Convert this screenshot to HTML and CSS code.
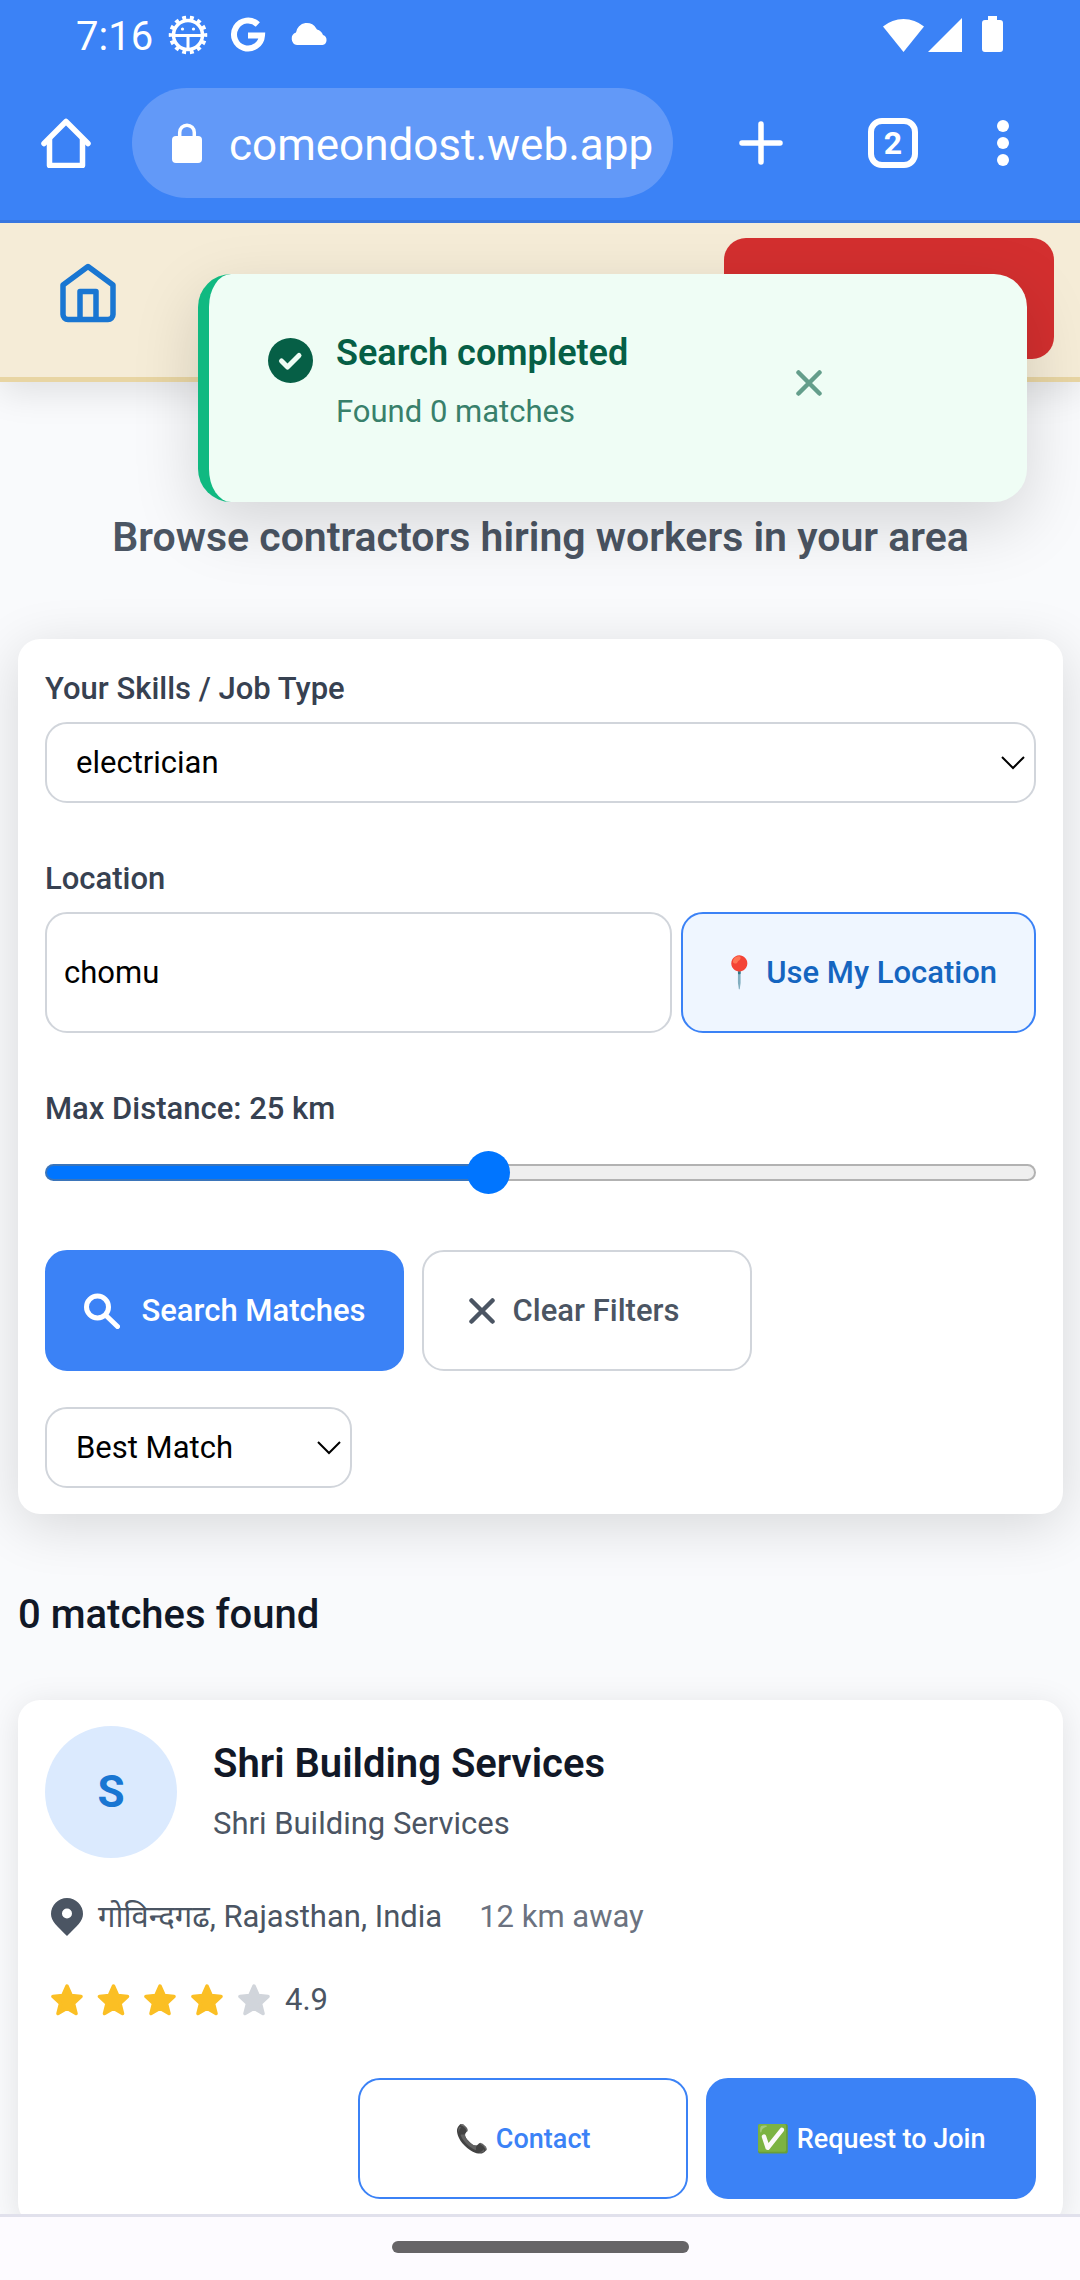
FILE: index.html
```html
<!DOCTYPE html>
<html lang="en">
<head>
<meta charset="utf-8">
<meta name="viewport" content="width=device-width">
<title>Browse contractors</title>
<link rel="stylesheet" href="styles.css">
</head>
<body>
<header class="browser">
  <div class="status">
    <span class="clock">7:16</span>
    <svg class="status-debug" width="40" height="40" viewBox="0 0 40 40" fill="none" stroke="#fff"><circle cx="20" cy="20" r="14.500" stroke-width="3.500"/><circle cx="20" cy="20" r="17" stroke-width="4.500" pathLength="140" stroke-dasharray="5 5" stroke-dashoffset="2.5"/><path d="M6 20.500h28M20 21v14" stroke-width="3"/><g fill="#fff" stroke="none"><circle cx="14.500" cy="14" r="1.600"/><circle cx="25.500" cy="14" r="1.600"/></g></svg>
    <svg class="status-google" width="36" height="36" viewBox="0 0 36 36" fill="none" stroke="#fff" stroke-width="6"><path d="M27.800 7.500A14 14 0 1 0 32 18.500H18"/></svg>
    <svg width="38" height="38" viewBox="0 0 38 38" fill="#fff"><path d="M7 29a6.500 6.500 0 0 1-1-12.500 11 11 0 0 1 21-3 9 9 0 0 1 6 5.500 5.200 5.200 0 0 1-.5 10z"/></svg>
    <span class="spacer"></span>
    <svg width="121" height="38" viewBox="0 0 121 38" fill="#fff"><path d="M0 10.500a32 32 0 0 1 41 0L20.500 36z"/><path d="M79 2v34H45z"/><path d="M105 0h9v4h3a3 3 0 0 1 3 3v26a3 3 0 0 1-3 3h-15a3 3 0 0 1-3-3V7a3 3 0 0 1 3-3h3z"/></svg>
  </div>
  <div class="toolbar">
    <button class="tool" type="button" aria-label="Home"><svg width="50" height="50" viewBox="0 0 50 50" fill="none" stroke="#fff" stroke-width="5.500" stroke-linecap="round" stroke-linejoin="round"><path d="M3 25.500L25 3.500l22 22"/><path d="M8.500 21v26.500h33V21"/></svg></button>
    <div class="address">
      <svg width="30" height="40" viewBox="0 0 30 40"><rect y="13" width="30" height="27" rx="4" fill="#fff"/><path d="M7.700 14V9.500a7.300 7.300 0 0 1 14.600 0V14" fill="none" stroke="#fff" stroke-width="3.500"/></svg>
      <input class="url" type="text" aria-label="Address" value="comeondost.web.app">
    </div>
    <button class="tool tool-new" type="button" aria-label="New tab"><svg width="44" height="44" viewBox="0 0 44 44" stroke="#fff" stroke-width="5.500" stroke-linecap="round"><path d="M3 22h38M22 3v38"/></svg></button>
    <button class="tool tabs" type="button">2</button>
    <button class="tool tool-menu" type="button" aria-label="Menu"><svg width="12" height="46" viewBox="0 0 12 46" fill="#fff"><circle cx="6" cy="6" r="6"/><circle cx="6" cy="23" r="6"/><circle cx="6" cy="40" r="6"/></svg></button>
  </div>
</header>

<div class="page">
  <nav class="nav">
    <a class="nav-home" href="#" aria-label="Home"><svg width="66" height="82" viewBox="0 0 66 82" fill="none" stroke="#1976d2" stroke-width="5.500" stroke-linejoin="round"><path d="M33 8.500l25 18.500v29.500a5 5 0 0 1-5 5H13a5 5 0 0 1-5-5V27z"/><path d="M25 61V33.500h16V61"/></svg></a>
    <button class="nav-action" type="button" aria-label="Account"></button>
  </nav>

  <aside class="toast" role="status">
    <svg width="45" height="45" viewBox="0 0 45 45"><circle cx="22.500" cy="22.500" r="22.500" fill="#065f46"/><path d="M13.500 23l6 6L31 17.500" fill="none" stroke="#effdf5" stroke-width="5" stroke-linecap="round" stroke-linejoin="round"/></svg>
    <div class="toast-text">
      <strong class="toast-title">Search completed</strong>
      <p class="toast-note">Found 0 matches</p>
    </div>
    <button class="toast-close" type="button" aria-label="Dismiss"><svg width="26" height="26" viewBox="0 0 26 26" stroke="#649e8b" stroke-width="4.500" stroke-linecap="round"><path d="M2.500 2.500l21 21M23.500 2.500l-21 21"/></svg></button>
  </aside>

  <main class="main">
    <h1 class="lead">Browse contractors hiring workers in your area</h1>

    <form class="card filters">
      <div class="field">
        <label class="label" for="skill">Your Skills / Job Type</label>
        <div class="select">
          <select class="control" id="skill"><option>electrician</option></select>
          <svg class="chevron" width="24" height="14" viewBox="0 0 24 14" fill="none" stroke="#000" stroke-width="2"><path d="M1 1l11 11L23 1"/></svg>
        </div>
      </div>
      <div class="field">
        <label class="label" for="place">Location</label>
        <div class="place">
          <input class="control place-input" id="place" type="text" value="chomu">
          <button class="btn btn-locate" type="button">📍 Use My Location</button>
        </div>
      </div>
      <div class="field field-range">
        <label class="label" for="distance">Max Distance: 25 km</label>
        <input class="range" id="distance" type="range" min="5" max="50" value="25">
      </div>
      <div class="actions">
        <button class="btn btn-primary btn-search" type="button"><svg width="36" height="36" viewBox="0 0 36 36" fill="none" stroke="#fff" stroke-width="5" stroke-linecap="round"><circle cx="13.500" cy="14" r="11"/><path d="M22 22.500l11.500 11"/></svg>Search Matches</button>
        <button class="btn btn-clear" type="button"><svg width="26" height="26" viewBox="0 0 26 26" stroke="#4b5563" stroke-width="4.500" stroke-linecap="round"><path d="M2.500 2.500l21 21M23.500 2.500l-21 21"/></svg>Clear Filters</button>
      </div>
      <div class="select select-sort">
        <select class="control" aria-label="Sort by"><option>Best Match</option></select>
        <svg class="chevron" width="24" height="14" viewBox="0 0 24 14" fill="none" stroke="#000" stroke-width="2"><path d="M1 1l11 11L23 1"/></svg>
      </div>
    </form>

    <h2 class="count">0 matches found</h2>

    <article class="card match">
      <div class="match-head">
        <span class="avatar">S</span>
        <div class="match-names">
          <h3 class="match-name">Shri Building Services</h3>
          <p class="text">Shri Building Services</p>
        </div>
      </div>
      <p class="text match-place"><svg width="32" height="38" viewBox="0 0 32 38" fill="#4b5563"><path fill-rule="evenodd" d="M16 0a16 16 0 0 1 16 16c0 7-6 12-16 22C6 28 0 23 0 16A16 16 0 0 1 16 0zm0 10.500a5 5 0 1 0 0 10 5 5 0 0 0 0-10z"/></svg><span>गोविन्दगढ, Rajasthan, India</span><span class="distance">12 km away</span></p>
      <p class="text rating">
        <svg width="220" height="32" viewBox="0 0 220 32" fill="#fbbf24" stroke-linejoin="round"><defs><path id="star" d="M16 2l4.200 9.500L30 12.500l-7.500 7L25 29.500l-9-5.200-9 5.200 2.500-10L2 12.500l9.800-1z" stroke-width="3.500"/></defs><g stroke="#fbbf24"><use href="#star"/><use href="#star" x="46.500"/><use href="#star" x="93"/><use href="#star" x="140"/></g><use href="#star" x="187" fill="#d1d5db" stroke="#d1d5db"/></svg>
        <span>4.9</span>
      </p>
      <div class="match-actions">
        <button class="btn btn-small btn-contact" type="button">📞 Contact</button>
        <button class="btn btn-small btn-primary" type="button">✅ Request to Join</button>
      </div>
    </article>
  </main>
</div>

<footer class="system"><span class="handle"></span></footer>
</body>
</html>
```
FILE: styles.css
```css
* { box-sizing: border-box; }
body {
  margin: 0;
  height: 100vh;
  display: flex;
  flex-direction: column;
  background: #f9fafc;
  color: #4b5563;
  font: 400 31px/46px Roboto, "Noto Sans", "Noto Sans Devanagari", "Noto Color Emoji", sans-serif;
}
h1, h2, h3, p { margin: 0; }
button, input, select { font: inherit; margin: 0; }
button { padding: 0; border: 0; background: none; }
svg { display: block; flex: none; }

/* Browser chrome */
.browser { flex: none; background: #3b82f6; border-bottom: 3px solid #3776e0; color: #fff; }
.status { display: flex; align-items: center; height: 70px; padding: 0 76px; }
.clock { padding-top: 3px; font-size: 40px; }
.status-debug { margin: 0 22px 0 15px; }
.status-google { margin-right: 24px; }
.spacer { flex: 1; }
.toolbar { display: flex; align-items: center; padding: 18px 71px 22px 41px; }
.address {
  flex: 1;
  min-width: 0;
  display: flex;
  align-items: center;
  gap: 27px;
  height: 110px;
  margin-left: 41px;
  padding: 0 16px 0 40px;
  border-radius: 55px;
  background: #6299f8;
}
.url { flex: 1; min-width: 0; height: 60px; padding: 4px 0 0; border: 0; background: none; color: #fff; font-size: 44px; }
.tool { flex: none; }
.tool-new { margin: 0 85px 0 66px; }
.tabs { width: 50px; height: 50px; border: 6px solid #fff; border-radius: 14px; color: #fff; font-size: 32px; font-weight: 700; line-height: 38px; }
.tool-menu { margin-left: 79px; }

/* Page */
.page { position: relative; flex: 1; min-height: 0; overflow: hidden; }
.nav {
  display: flex;
  justify-content: space-between;
  align-items: center;
  padding: 15px 26px 18px 55px;
  background: #f5ecd7;
  border-bottom: 5px solid #e8d5a3;
  box-shadow: 0 11px 33px rgba(0, 0, 0, .1);
}
.nav-action { width: 330px; height: 121px; border-radius: 22px; background: #d32f2f; }
.toast {
  position: absolute;
  top: 51px;
  right: 53px;
  display: flex;
  width: 829px;
  height: 228px;
  padding: 56px 205px 0 59px;
  border-left: 11px solid #10b981;
  border-radius: 33px;
  background: #effdf5;
  color: #065f46;
  box-shadow: 0 22px 66px rgba(0, 0, 0, .15);
}
.toast > svg { margin: 8px 23px 0 0; }
.toast-text { flex: 1; display: flex; flex-direction: column; gap: 13px; }
.toast-title { font-size: 36px; font-weight: 600; }
.toast-note { color: #38806b; }
.toast-close { align-self: flex-start; padding: 40px 0; }

.main { padding: 125px 17px 0 18px; }
.lead { margin-bottom: 72px; text-align: center; font-size: 41px; font-weight: 600; line-height: 60px; }
.card { padding: 26px 27px; border-radius: 22px; background: #fff; box-shadow: 0 11px 55px rgba(0, 0, 0, .14); }
.filters { padding-top: 27px; }
.field { display: flex; flex-direction: column; gap: 10px; margin-bottom: 53px; }
.field-range { margin-bottom: 47px; }
.label { color: #374151; font-weight: 500; }
.control {
  width: 100%;
  height: 81px;
  padding: 0 29px;
  border: 2px solid #d1d5db;
  border-radius: 22px;
  background: #fff;
  color: #000;
  appearance: none;
}
.select { display: grid; align-items: center; }
.select > * { grid-area: 1 / 1; }
.chevron { justify-self: end; margin-right: 11px; pointer-events: none; }
.select-sort { width: 307px; }
.place { display: flex; gap: 9px; }
.place-input { flex: 1; min-width: 0; height: 121px; padding: 0 17px; }
.range { width: 100%; height: 61px; appearance: none; background: none; }
.range::-webkit-slider-runnable-track {
  height: 17px;
  border: 2px solid rgba(118, 118, 118, .5);
  border-radius: 9px;
  background: linear-gradient(90deg, #0075ff 45%, #efefef 45%) border-box;
}
.range::-webkit-slider-thumb { appearance: none; width: 43px; height: 43px; margin-top: -15px; border-radius: 50%; background: #0075ff; }
.btn {
  display: flex;
  align-items: center;
  justify-content: center;
  width: 330px;
  height: 121px;
  border: 2px solid #d1d5db;
  border-radius: 22px;
  font-weight: 500;
  white-space: nowrap;
}
.btn-locate { width: 355px; border-color: #3b82f6; background: #eff6ff; color: #1565c0; }
.btn-primary { border-color: #3b82f6; background: #3b82f6; color: #fff; }
.btn-search { width: 359px; gap: 22px; }
.btn-clear { gap: 18px; padding-right: 26px; color: #4b5563; }
.btn-contact { border-color: #3b82f6; color: #3b82f6; }
.btn-small { font-size: 27px; }
.actions { display: flex; flex-wrap: wrap; gap: 18px; margin-bottom: 36px; }

.count { margin: 71px 0 55px; color: #111827; font-size: 40px; font-weight: 500; line-height: 60px; }
.match { box-shadow: 0 5px 33px rgba(0, 0, 0, .1); }
.match-head { display: flex; align-items: center; gap: 36px; margin-bottom: 36px; }
.avatar { width: 132px; height: 132px; border-radius: 50%; background: #dbeafe; color: #1976d2; font-size: 44px; font-weight: 700; line-height: 132px; text-align: center; }
.match-names { display: flex; flex-direction: column; gap: 10px; }
.match-name { color: #111827; font-size: 40px; font-weight: 600; line-height: 54px; }
.match-place { display: flex; align-items: center; gap: 15px; margin-bottom: 37px; padding-left: 6px; }
.distance { margin-left: 22px; color: #6b7280; }
.rating { display: flex; align-items: center; gap: 14px; margin-bottom: 55px; padding-left: 6px; }
.match-actions { display: flex; justify-content: flex-end; gap: 18px; }

.system { flex: none; display: flex; justify-content: center; padding: 24px 0 27px; border-top: 3px solid #e1e1ec; background: #fdfbff; }
.handle { width: 297px; height: 12px; border-radius: 6px; background: #666467; }
```
